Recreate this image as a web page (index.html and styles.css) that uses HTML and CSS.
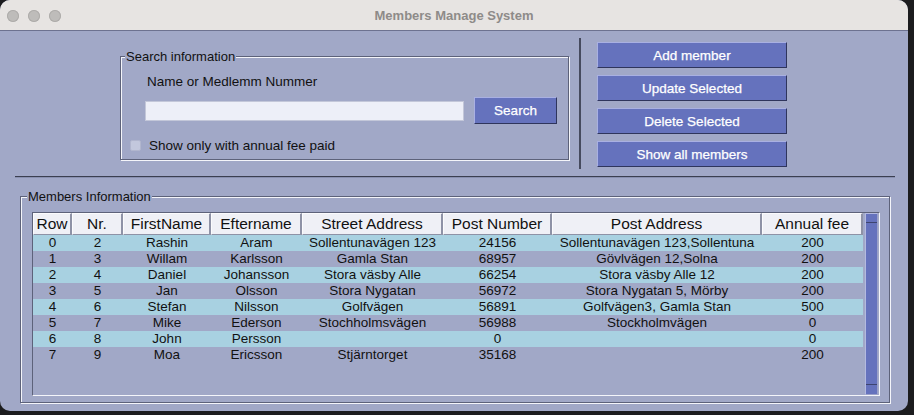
FILE: index.html
```html
<!DOCTYPE html>
<html lang="en">
<head>
<meta charset="utf-8">
<title>Members Manage System</title>
<link rel="stylesheet" href="styles.css">
</head>
<body>
<div class="window">
  <header class="titlebar">
    <div class="lights"><span class="light"></span><span class="light"></span><span class="light"></span></div>
    <div class="title">Members Manage System</div>
    <div></div>
  </header>

  <section class="top">
    <fieldset class="group search">
      <legend>Search information</legend>
      <div class="field-label">Name or Medlemm Nummer</div>
      <div class="search-row">
        <input class="search-input" type="text">
        <button class="btn btn-search">Search</button>
      </div>
      <label class="check-row"><span class="checkbox"></span>Show only with annual fee paid</label>
    </fieldset>
    <div class="vsep"></div>
    <div class="actions">
      <button class="btn btn-action">Add member</button>
      <button class="btn btn-action">Update Selected</button>
      <button class="btn btn-action">Delete Selected</button>
      <button class="btn btn-action">Show all members</button>
    </div>
  </section>

  <div class="hsep"></div>

  <fieldset class="group members">
    <legend>Members Information</legend>
    <div class="frame">
      <table class="grid">
        <colgroup>
          <col style="width:39px"><col style="width:51px"><col style="width:88px"><col style="width:91px">
          <col style="width:141px"><col style="width:109px"><col style="width:210px"><col style="width:101px">
        </colgroup>
        <thead>
          <tr><th>Row</th><th>Nr.</th><th>FirstName</th><th>Eftername</th><th>Street Address</th><th>Post Number</th><th>Post Address</th><th>Annual fee</th></tr>
        </thead>
        <tbody>
          <tr class="alt"><td>0</td><td>2</td><td>Rashin</td><td>Aram</td><td>Sollentunavägen 123</td><td>24156</td><td>Sollentunavägen 123,Sollentuna</td><td>200</td></tr>
          <tr><td>1</td><td>3</td><td>Willam</td><td>Karlsson</td><td>Gamla Stan</td><td>68957</td><td>Gövlvägen 12,Solna</td><td>200</td></tr>
          <tr class="alt"><td>2</td><td>4</td><td>Daniel</td><td>Johansson</td><td>Stora väsby Alle</td><td>66254</td><td>Stora väsby Alle 12</td><td>200</td></tr>
          <tr><td>3</td><td>5</td><td>Jan</td><td>Olsson</td><td>Stora Nygatan</td><td>56972</td><td>Stora Nygatan 5, Mörby</td><td>200</td></tr>
          <tr class="alt"><td>4</td><td>6</td><td>Stefan</td><td>Nilsson</td><td>Golfvägen</td><td>56891</td><td>Golfvägen3, Gamla Stan</td><td>500</td></tr>
          <tr><td>5</td><td>7</td><td>Mike</td><td>Ederson</td><td>Stochholmsvägen</td><td>56988</td><td>Stockholmvägen</td><td>0</td></tr>
          <tr class="alt"><td>6</td><td>8</td><td>John</td><td>Persson</td><td></td><td>0</td><td></td><td>0</td></tr>
          <tr><td>7</td><td>9</td><td>Moa</td><td>Ericsson</td><td>Stjärntorget</td><td>35168</td><td></td><td>200</td></tr>
        </tbody>
      </table>
      <div class="scrollbar">
        <div class="sb-cap"></div>
        <div class="sb-cap sb-bottom"></div>
      </div>
    </div>
  </fieldset>
</div>
</body>
</html>
```

FILE: styles.css
```css
html, body {
  margin: 0;
  padding: 0;
  background: #1c1c1e;
}

body {
  font-family: "Liberation Sans", Arial, sans-serif;
  color: #111;
}

.window {
  width: 908px;
  height: 411px;
  background: #a1a8c7;
  border-radius: 10px;
  overflow: hidden;
}

.titlebar {
  height: 30px;
  background: #e7e4e2;
  border-bottom: 1px solid #6d7290;
  display: grid;
  grid-template-columns: 1fr auto 1fr;
  align-items: center;
}

.lights {
  display: flex;
  gap: 9px;
  padding-left: 7px;
  padding-top: 1px;
}

.light {
  width: 12px;
  height: 12px;
  border-radius: 50%;
  background: #bebcba;
  box-shadow: inset 0 0 0 1px #aeacaa;
}

.title {
  font-size: 13px;
  font-weight: bold;
  color: #8e8b89;
}

.top {
  display: flex;
  align-items: flex-start;
  height: 145px;
}

.group {
  margin: 0;
  padding: 0;
  min-width: 0;
  box-sizing: border-box;
  border: 1px solid #5d627a;
  box-shadow: inset 1px 1px 0 #f4f5fa, 1px 1px 0 #f4f5fa;
}

.group legend {
  font-size: 13px;
  line-height: 15px;
  padding: 0 1px;
  background: #a1a8c7;
  color: #111;
}

.search {
  margin-left: 120px;
  margin-top: 18px;
  width: 449px;
  padding-bottom: 6px;
}

.search legend {
  margin-left: 4px;
}

.field-label {
  margin: 10px 0 0 26px;
  font-size: 13.5px;
  line-height: 16px;
}

.search-row {
  display: flex;
  align-items: center;
  gap: 10px;
  height: 27px;
  margin-top: 7px;
  padding-left: 24px;
}

.search-input {
  width: 319px;
  height: 20px;
  box-sizing: border-box;
  margin: 0;
  padding: 0 4px;
  border: 1px solid #c3c7d9;
  background: #edeff8;
  outline: none;
}

.check-row {
  display: flex;
  align-items: center;
  gap: 8px;
  height: 16px;
  margin-top: 13px;
  padding-left: 9px;
  font-size: 13.5px;
}

.checkbox {
  width: 11px;
  height: 11px;
  box-sizing: border-box;
  border-radius: 2px;
  background: #c3c8dd;
  border: 1px solid #b1b6ce;
}

.btn {
  box-sizing: border-box;
  margin: 0;
  padding: 0;
  background: #6572bd;
  color: #fff;
  border: 1px solid;
  border-color: #a9b0e2 #2f355c #2f355c #a9b0e2;
  font-family: "Liberation Sans", Arial, sans-serif;
  font-size: 13.5px;
  -webkit-text-stroke: 0.25px #fff;
}

.btn-search {
  width: 83px;
  height: 27px;
}

.vsep {
  width: 2px;
  height: 131px;
  margin: 7px 0 0 10px;
  background: #464a5e;
}

.actions {
  display: flex;
  flex-direction: column;
  gap: 7px;
  margin: 11px 0 0 16px;
}

.btn-action {
  width: 190px;
  height: 26px;
}

.hsep {
  margin: 0 13px 0 15px;
  height: 0;
  border-top: 1px solid #3b3f50;
  border-bottom: 1px solid #8990b0;
}

.members {
  margin: 11px 0 0 20px;
  width: 870px;
  padding: 8px 0 6px 0;
}

.members legend {
  margin-left: 6px;
}

.frame {
  width: 848px;
  height: 184px;
  margin-left: 11px;
  box-sizing: border-box;
  border: 1px solid;
  border-color: #5d627a #f4f5fa #f4f5fa #5d627a;
  display: flex;
  align-items: stretch;
}

.grid {
  width: 830px;
  table-layout: fixed;
  border-collapse: separate;
  border-spacing: 0;
  align-self: flex-start;
}

.grid th {
  padding: 0;
  height: 22px;
  box-sizing: border-box;
  background: #eff0f6;
  border-style: solid;
  border-width: 1px 2px 1px 1px;
  border-color: #fbfbfd #8e92a6 #8e92a6 #fbfbfd;
  font-weight: normal;
  font-size: 15.5px;
  line-height: 20px;
  color: #111;
  white-space: nowrap;
  overflow: hidden;
}

.grid td {
  padding: 0;
  height: 16px;
  font-size: 13.5px;
  line-height: 16px;
  text-align: center;
  white-space: nowrap;
  overflow: hidden;
  color: #111;
}

.grid tr.alt td {
  background: #a8d1e1;
}

.scrollbar {
  width: 13px;
  margin-left: 2px;
  box-sizing: border-box;
  background: #6572bd;
  border: 1px solid;
  border-color: #b4bae0 #9aa0c8 #9aa0c8 #b4bae0;
  display: flex;
  flex-direction: column;
  justify-content: space-between;
}

.sb-cap {
  height: 9px;
  box-sizing: border-box;
  border-bottom: 1px solid #3d4470;
}

.sb-cap.sb-bottom {
  height: 10px;
  border-bottom: 0;
  border-top: 1px solid #3d4470;
}
```
